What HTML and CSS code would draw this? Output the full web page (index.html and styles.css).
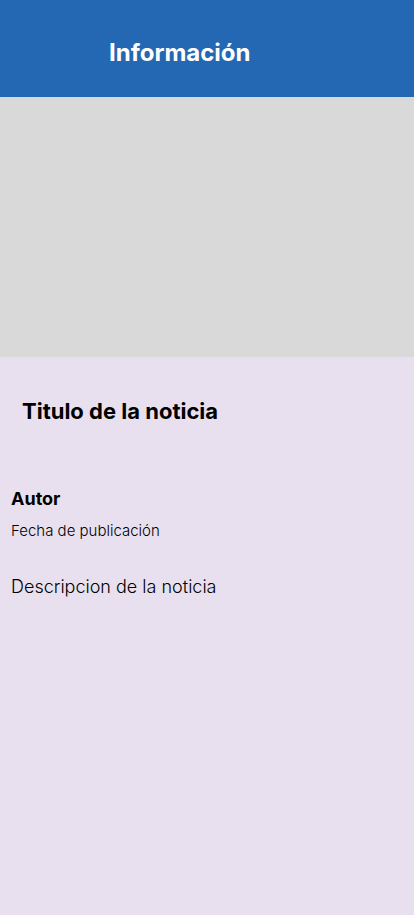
FILE: index.html
```html
<!DOCTYPE html>
<html lang="es">
<head>
<meta charset="utf-8">
<link rel="stylesheet" href="styles.css">
</head>
<body>
<header class="topbar"><h1 class="topbar-title">Información</h1></header>
<div class="hero"></div>
<main class="content">
  <h2 class="news-title">Titulo de la noticia</h2>
  <div class="meta">
    <p class="author">Autor</p>
    <p class="date">Fecha de publicación</p>
  </div>
  <p class="description">Descripcion de la noticia</p>
</main>
</body>
</html>
```
FILE: styles.css
```css
html, body { margin: 0; padding: 0; }
body {
  font-family: Inter, "Noto Sans", sans-serif;
  background: #e8e0ee;
  color: #000;
  width: 414px;
  min-height: 915px;
}
.topbar {
  background: #2468b3;
  height: 97px;
  display: flex;
  align-items: center;
  padding: 8px 0 0 109px;
  box-sizing: border-box;
}
.topbar-title {
  margin: 0;
  color: #fff;
  font-size: 24px;
  font-weight: 700;
}
.hero {
  height: 260px;
  background: #d9d9d9;
}
.content {
  padding: 0 11px;
}
.news-title {
  margin: 0;
  padding: 39px 0 0 11px;
  font-size: 22px;
  font-weight: 700;
  line-height: 30px;
}
.meta { padding-top: 62px; }
.author {
  margin: 0;
  font-size: 18px;
  font-weight: 700;
  line-height: 22px;
}
.date {
  margin: 12px 0 0;
  font-size: 15px;
  font-weight: 300;
  line-height: 18px;
}
.description {
  margin: 36px 0 0;
  font-size: 18px;
  font-weight: 300;
  line-height: 22px;
}
```
